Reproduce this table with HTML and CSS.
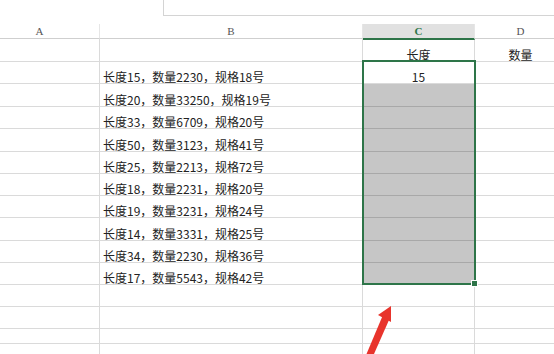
FILE: index.html
```html
<!DOCTYPE html>
<html>
<head>
<meta charset="utf-8">
<link rel="stylesheet" href="styles.css">
</head>
<body>
<div class="topbar"><div class="namebox"></div></div>
<div class="sheet">
  <div class="cell colhead r0">A</div>
  <div class="cell colhead r0">B</div>
  <div class="cell colhead r0 active">C</div>
  <div class="cell colhead r0">D</div>

  <div class="cell r23"></div><div class="cell r23"></div><div class="cell r23 center">长度</div><div class="cell r23 center">数量</div>

  <div class="cell r22"></div><div class="cell r22 text">长度15，数量2230，规格18号</div><div class="cell r22 center">15</div><div class="cell r22"></div>
  <div class="cell r23"></div><div class="cell r23 text">长度20，数量33250，规格19号</div><div class="cell r23 sel"></div><div class="cell r23"></div>
  <div class="cell r22"></div><div class="cell r22 text">长度33，数量6709，规格20号</div><div class="cell r22 sel"></div><div class="cell r22"></div>
  <div class="cell r23"></div><div class="cell r23 text">长度50，数量3123，规格41号</div><div class="cell r23 sel"></div><div class="cell r23"></div>
  <div class="cell r22"></div><div class="cell r22 text">长度25，数量2213，规格72号</div><div class="cell r22 sel"></div><div class="cell r22"></div>
  <div class="cell r22"></div><div class="cell r22 text">长度18，数量2231，规格20号</div><div class="cell r22 sel"></div><div class="cell r22"></div>
  <div class="cell r22"></div><div class="cell r22 text">长度19，数量3231，规格24号</div><div class="cell r22 sel"></div><div class="cell r22"></div>
  <div class="cell r23"></div><div class="cell r23 text">长度14，数量3331，规格25号</div><div class="cell r23 sel"></div><div class="cell r23"></div>
  <div class="cell r22"></div><div class="cell r22 text">长度34，数量2230，规格36号</div><div class="cell r22 sel"></div><div class="cell r22"></div>
  <div class="cell r22"></div><div class="cell r22 text">长度17，数量5543，规格42号</div><div class="cell r22 sel last"></div><div class="cell r22"></div>

  <div class="cell r22"></div><div class="cell r22"></div><div class="cell r22"></div><div class="cell r22"></div>
  <div class="cell r22"></div><div class="cell r22"></div><div class="cell r22"></div><div class="cell r22"></div>
  <div class="cell r15"></div><div class="cell r15"></div><div class="cell r15"></div><div class="cell r15"></div>
  <div class="cell r22"></div><div class="cell r22"></div><div class="cell r22"></div><div class="cell r22"></div>

  <div class="selection"><div class="handle"></div></div>
</div>
<svg class="arrow" width="554" height="354" viewBox="0 0 554 354">
  <polygon points="391,306 378,315 391,322" fill="#e8342c"/>
  <polygon points="382.5,316 389,320 374,354 366.5,354" fill="#e8342c"/>
</svg>
</body>
</html>
```
FILE: styles.css
```css
html, body {
  margin: 0;
  padding: 0;
  background: #fff;
  overflow: hidden;
  width: 554px;
  height: 354px;
  position: relative;
}
.topbar {
  height: 16px;
  padding-left: 163px;
  margin-bottom: 8px;
}
.namebox {
  height: 15px;
  border-left: 1px solid #d4d4d4;
  border-bottom: 1px solid #d4d4d4;
}
.sheet {
  position: relative;
  display: grid;
  grid-template-columns: 120px 263px 112px 92px;
  margin-left: -20px;
  font-family: "Noto Sans CJK SC", "Liberation Sans", sans-serif;
  font-size: 12px;
  color: #222;
}
.cell {
  box-sizing: border-box;
  border-right: 1px solid #dadada;
  border-bottom: 1px solid #dadada;
  display: flex;
  align-items: flex-end;
  padding-bottom: 0;
  line-height: 12px;
  white-space: nowrap;
}
.r0 { height: 15px; }
.r15 { height: 15px; }
.r22 { height: 22px; }
.r23 { height: 23px; }
.colhead {
  align-items: center;
  justify-content: center;
  padding: 0;
  font-family: "Liberation Serif", serif;
  font-size: 11px;
  color: #555;
  border-bottom-color: #cfcfcf;
  border-right-color: #e6e6e6;
}
.colhead.active {
  background: #e1e1e1;
  color: #2e7549;
  font-weight: bold;
  border-bottom: 2px solid #2e7549;
  height: 16px;
  margin-bottom: -1px;
  position: relative;
  z-index: 1;
}
.center { justify-content: center; }
.text { padding-left: 3px; }
.sel {
  background: #c6c6c6;
  border-bottom-color: #a8a8a8;
}
.selection {
  position: absolute;
  left: 382px;
  top: 36px;
  width: 114px;
  height: 225px;
  box-sizing: border-box;
  border: 2px solid #2e7549;
  pointer-events: none;
}
.handle {
  position: absolute;
  right: -4px;
  bottom: -4px;
  width: 5px;
  height: 5px;
  background: #2e7549;
  border: 1px solid #fff;
}
.arrow {
  position: absolute;
  left: 0;
  top: 0;
}
```
